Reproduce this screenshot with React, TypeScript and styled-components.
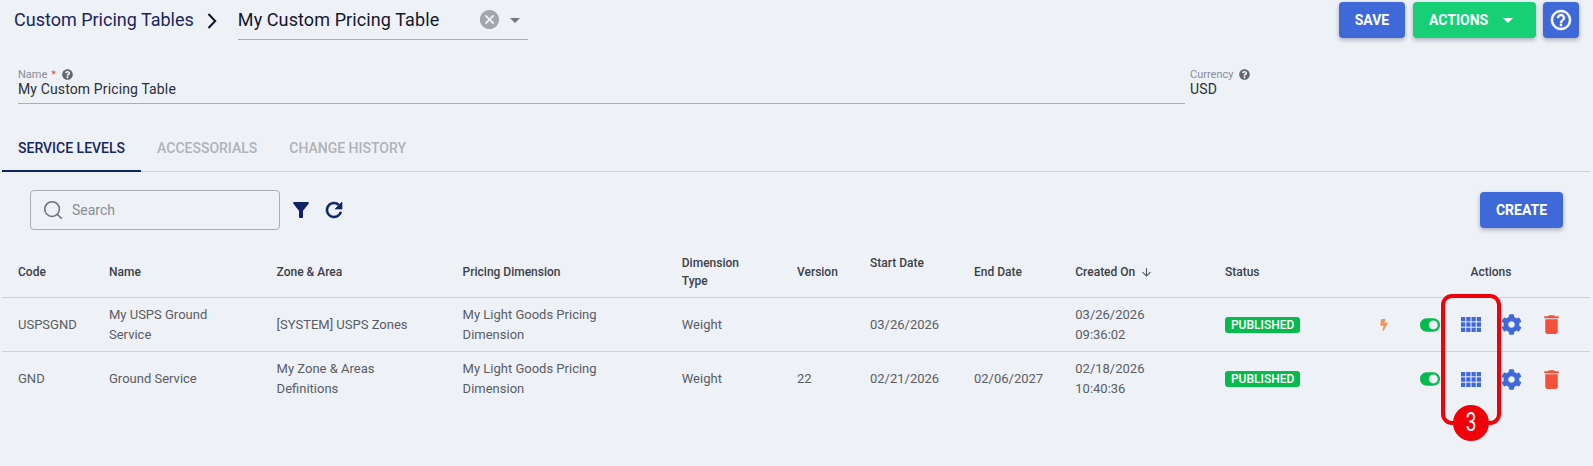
import React from "react";
import styled, { createGlobalStyle } from "styled-components";
import { FaBolt, FaCog, FaToggleOn, FaQuestionCircle } from "react-icons/fa";
import { MdArrowDropDown, MdCancel, MdHelpOutline, MdArrowDownward, MdFilterAlt, MdDelete, MdRefresh } from "react-icons/md";
import { Search } from "lucide-react";

const GlobalStyle = createGlobalStyle`
  html, body { margin: 0; padding: 0; background: #eef1f6; }
  body { font-family: Roboto, "Liberation Sans", sans-serif; width: 1593px; height: 466px; overflow: hidden; }
  * { box-sizing: border-box; }
`;

const Page = styled.div`
  position: relative;
  width: 1593px;
  height: 466px;
  background: #eef1f6;
  overflow: hidden;
`;

const TopBar = styled.header`
  display: flex;
  align-items: flex-start;
  height: 64px;
  padding: 2px 14px 0 14px;
`;

const Crumb = styled.span`
  font-size: 18px;
  line-height: 36px;
  color: #17265f;
`;

const CrumbArrow = styled.span`
  display: flex;
  width: 20px;
  height: 36px;
  margin: 1px 0 0 8px;
  align-items: center;
  justify-content: center;
  color: #10152e;
`;

const TableSelect = styled.div`
  display: flex;
  align-items: center;
  width: 290px;
  height: 38px;
  margin-left: 16px;
  padding-bottom: 2px;
  border-bottom: 1px solid #a9adb6;
  font-size: 18px;
  letter-spacing: 0.1px;
  color: #14182a;
`;

const SelectValue = styled.span`
  flex: 1;
`;

const SelectClear = styled.span`
  display: flex;
  color: #a3a6ac;
  font-size: 23px;
  margin-right: 1.5px;
`;

const SelectCaret = styled.span`
  display: flex;
  color: #74777e;
  font-size: 24px;
  margin-right: 1px;
`;

const Spacer = styled.div`
  flex: 1;
`;

const Button = styled.button<{ $green?: boolean }>`
  display: inline-flex;
  align-items: center;
  justify-content: center;
  height: 36px;
  padding: 0;
  border: 0;
  border-radius: 4px;
  background: ${(p) => (p.$green ? "#17d075" : "#3f69d9")};
  color: #fff;
  font-family: inherit;
  font-size: 14px;
  font-weight: 700;
  box-shadow: 0 2px 4px rgba(40, 50, 80, 0.35);
`;

const SaveButton = styled(Button)`
  width: 66px;
  margin-right: 8px;
`;

const ActionsButton = styled(Button)`
  justify-content: flex-start;
  width: 123px;
  margin-right: 7px;
  padding-left: 16px;
  gap: 7.5px;
  svg { font-size: 24px; }
`;

const HelpButton = styled(Button)`
  width: 36px;
  font-size: 24px;
  svg path:last-child { stroke: currentColor; stroke-width: 0.5; }
`;

const Fields = styled.section`
  display: flex;
  height: 42px;
  padding-left: 18px;
`;

const Field = styled.div<{ $width: number; $line?: boolean }>`
  width: ${(p) => p.$width}px;
  height: 40px;
  margin-right: 5px;
  border-bottom: ${(p) => (p.$line ? "1px solid #a9adb6" : "0")};
`;

const FieldLabel = styled.div`
  display: flex;
  align-items: center;
  height: 14px;
  margin-top: 3px;
  gap: 4px;
  font-size: 11px;
  color: #8a8d94;
`;

const Req = styled.span`
  color: #e8503c;
`;

const Hint = styled.span`
  display: flex;
  font-size: 11px;
  color: #63666c;
  margin-left: 2px;
`;

const FieldValue = styled.div`
  font-size: 14px;
  line-height: 17px;
  letter-spacing: 0.13px;
  color: #2c2f36;
`;

const Tabs = styled.nav`
  display: flex;
  height: 66px;
  margin: 0 3px 0 2px;
  padding-top: 23px;
  border-bottom: 1px solid #cfd2d8;
`;

const Tab = styled.div<{ $active?: boolean }>`
  height: 43px;
  margin-bottom: -1px;
  padding: 11px 16px 0;
  font-size: 14px;
  line-height: 16px;
  font-weight: 500;
  color: ${(p) => (p.$active ? "#17265f" : "#b0b2b8")};
  border-bottom: 2px solid ${(p) => (p.$active ? "#0f2468" : "transparent")};
`;

const Toolbar = styled.section`
  display: flex;
  align-items: center;
  height: 40px;
  margin: 18px 30px 0 30px;
`;

const SearchBox = styled.div`
  display: flex;
  align-items: center;
  width: 250px;
  height: 40px;
  padding-left: 11px;
  border: 1px solid #a9adb6;
  border-radius: 4px;
  color: #8a8d94;
  font-size: 14px;
  gap: 8px;
  svg { color: #6b6e74; }
`;

const ToolIcon = styled.span<{ $size: number; $gap: number }>`
  display: flex;
  margin-left: ${(p) => p.$gap}px;
  color: #0f2468;
  font-size: ${(p) => p.$size}px;
`;

const RefreshIcon = styled(ToolIcon)`
  svg path:last-child { stroke: currentColor; stroke-width: 0.6; }
`;

const CreateButton = styled(Button)`
  width: 83px;
`;

const COLUMNS = "91px 167.6px 186px 219.2px 115.2px 73px 104px 101.3px 149.7px 130px 235px";

const Table = styled.section`
  margin: 19px 3px 0 2px;
`;

const HeadRow = styled.div`
  display: grid;
  grid-template-columns: ${COLUMNS};
  align-items: center;
  height: 49px;
  padding: 0 0 2px 16px;
  border-bottom: 1px solid #cfd2d8;
  font-size: 12px;
  line-height: 18px;
  font-weight: 500;
  color: #3d4048;
`;

const BodyRow = styled.div<{ $last?: boolean }>`
  display: grid;
  grid-template-columns: ${COLUMNS};
  align-items: center;
  height: 54px;
  padding-left: 16px;
  border-bottom: ${(p) => (p.$last ? "0" : "1px solid #cfd2d8")};
  font-size: 13px;
  line-height: 20px;
  color: #5a5d63;
`;

const HeadAside = styled.span`
  align-self: start;
  margin-top: 5px;
`;

const SortHead = styled.span`
  display: flex;
  align-items: center;
  gap: 5px;
  svg { font-size: 13px; color: #4f525a; }
`;

const ActionsHead = styled.span`
  text-align: center;
  padding-left: 37px;
`;

const Cell = styled.span<{ $max: number }>`
  max-width: ${(p) => p.$max}px;
`;

const Status = styled.span`
  display: inline-block;
  height: 16px;
  padding: 0 6px;
  border-radius: 3px;
  background: #05bb4e;
  color: #fff;
  font-size: 12px;
  font-weight: 500;
  line-height: 16px;
`;

const ActionIcons = styled.div`
  display: flex;
  align-items: center;
  justify-content: flex-end;
  gap: 20.6px;
  padding-right: 28px;
`;

const ActionIcon = styled.span<{ $color: string; $size: number; $gap?: number }>`
  display: flex;
  align-items: center;
  justify-content: center;
  width: 20px;
  height: 20px;
  margin-right: ${(p) => p.$gap ?? 0}px;
  color: ${(p) => p.$color};
  font-size: ${(p) => p.$size}px;
  svg { flex-shrink: 0; }
`;

const CalloutFrame = styled.div`
  position: absolute;
  left: 1441px;
  top: 294px;
  width: 60px;
  height: 131px;
  border: 4px solid #f00008;
  border-radius: 11px;
`;

const CalloutBadge = styled.div`
  position: absolute;
  left: 1453px;
  top: 405px;
  width: 36px;
  height: 36px;
  border-radius: 50%;
  background: #f00008;
  color: #fff;
  font-size: 25px;
  line-height: 36px;
  text-align: center;
`;

const BadgeDigit = styled.span`
  display: inline-block;
  transform: scaleX(0.76);
`;

const GridIcon = () => (
  <svg width="20" height="15" viewBox="0 0 20 15" fill="currentColor" aria-hidden="true">
    {[0, 5.33, 10.67].map((y) =>
      [0, 5.25, 10.5, 15.75].map((x) => <rect key={`${x}-${y}`} x={x} y={y} width="4.25" height="4.33" />)
    )}
  </svg>
);

const ChevronIcon = () => (
  <svg width="10" height="16" viewBox="0 0 10 16" fill="none" stroke="currentColor" strokeWidth="2" aria-hidden="true">
    <polyline points="1.5,1 8.2,8 1.5,15" />
  </svg>
);

const rows = [
  {
    code: "USPSGND", name: "My USPS Ground Service", zone: "[SYSTEM] USPS Zones", version: "",
    start: "03/26/2026", end: "", created: ["03/26/2026", "09:36:02"], bolt: true,
  },
  {
    code: "GND", name: "Ground Service", zone: "My Zone & Areas Definitions", version: "22",
    start: "02/21/2026", end: "02/06/2027", created: ["02/18/2026", "10:40:36"], bolt: false,
  },
];

export default function App() {
  return (
    <Page>
      <GlobalStyle />
      <TopBar>
        <Crumb>Custom Pricing Tables</Crumb>
        <CrumbArrow><ChevronIcon /></CrumbArrow>
        <TableSelect>
          <SelectValue>My Custom Pricing Table</SelectValue>
          <SelectClear><MdCancel /></SelectClear>
          <SelectCaret><MdArrowDropDown /></SelectCaret>
        </TableSelect>
        <Spacer />
        <SaveButton>SAVE</SaveButton>
        <ActionsButton $green>ACTIONS<MdArrowDropDown /></ActionsButton>
        <HelpButton><MdHelpOutline /></HelpButton>
      </TopBar>
      <Fields>
        <Field $width={1167} $line>
          <FieldLabel>Name <Req>*</Req><Hint><FaQuestionCircle /></Hint></FieldLabel>
          <FieldValue>My Custom Pricing Table</FieldValue>
        </Field>
        <Field $width={100}>
          <FieldLabel>Currency<Hint><FaQuestionCircle /></Hint></FieldLabel>
          <FieldValue>USD</FieldValue>
        </Field>
      </Fields>
      <Tabs>
        <Tab $active>SERVICE LEVELS</Tab>
        <Tab>ACCESSORIALS</Tab>
        <Tab>CHANGE HISTORY</Tab>
      </Tabs>
      <Toolbar>
        <SearchBox><Search size={22} strokeWidth={1.7} />Search</SearchBox>
        <ToolIcon $size={24} $gap={9}><MdFilterAlt /></ToolIcon>
        <RefreshIcon $size={24} $gap={9}><MdRefresh /></RefreshIcon>
        <Spacer />
        <CreateButton>CREATE</CreateButton>
      </Toolbar>
      <Table>
        <HeadRow>
          <span>Code</span>
          <span>Name</span>
          <span>Zone &amp; Area</span>
          <span>Pricing Dimension</span>
          <span>Dimension<br />Type</span>
          <span>Version</span>
          <HeadAside>Start Date</HeadAside>
          <span>End Date</span>
          <SortHead>Created On <MdArrowDownward /></SortHead>
          <span>Status</span>
          <ActionsHead>Actions</ActionsHead>
        </HeadRow>
        {rows.map((r, i) => (
          <BodyRow key={r.code} $last={i === rows.length - 1}>
            <span>{r.code}</span>
            <Cell $max={120}>{r.name}</Cell>
            <Cell $max={140}>{r.zone}</Cell>
            <Cell $max={170}>My Light Goods Pricing Dimension</Cell>
            <span>Weight</span>
            <span>{r.version}</span>
            <span>{r.start}</span>
            <span>{r.end}</span>
            <span>{r.created[0]}<br />{r.created[1]}</span>
            <span><Status>PUBLISHED</Status></span>
            <ActionIcons>
              {r.bolt && <ActionIcon $color="#f5935a" $size={12} $gap={5.4}><FaBolt /></ActionIcon>}
              <ActionIcon $color="#05bb4e" $size={20}><FaToggleOn /></ActionIcon>
              <ActionIcon $color="#3f69d9" $size={20}><GridIcon /></ActionIcon>
              <ActionIcon $color="#3f69d9" $size={21}><FaCog /></ActionIcon>
              <ActionIcon $color="#f5503a" $size={25}><MdDelete /></ActionIcon>
            </ActionIcons>
          </BodyRow>
        ))}
      </Table>
      <CalloutFrame />
      <CalloutBadge><BadgeDigit>3</BadgeDigit></CalloutBadge>
    </Page>
  );
}
